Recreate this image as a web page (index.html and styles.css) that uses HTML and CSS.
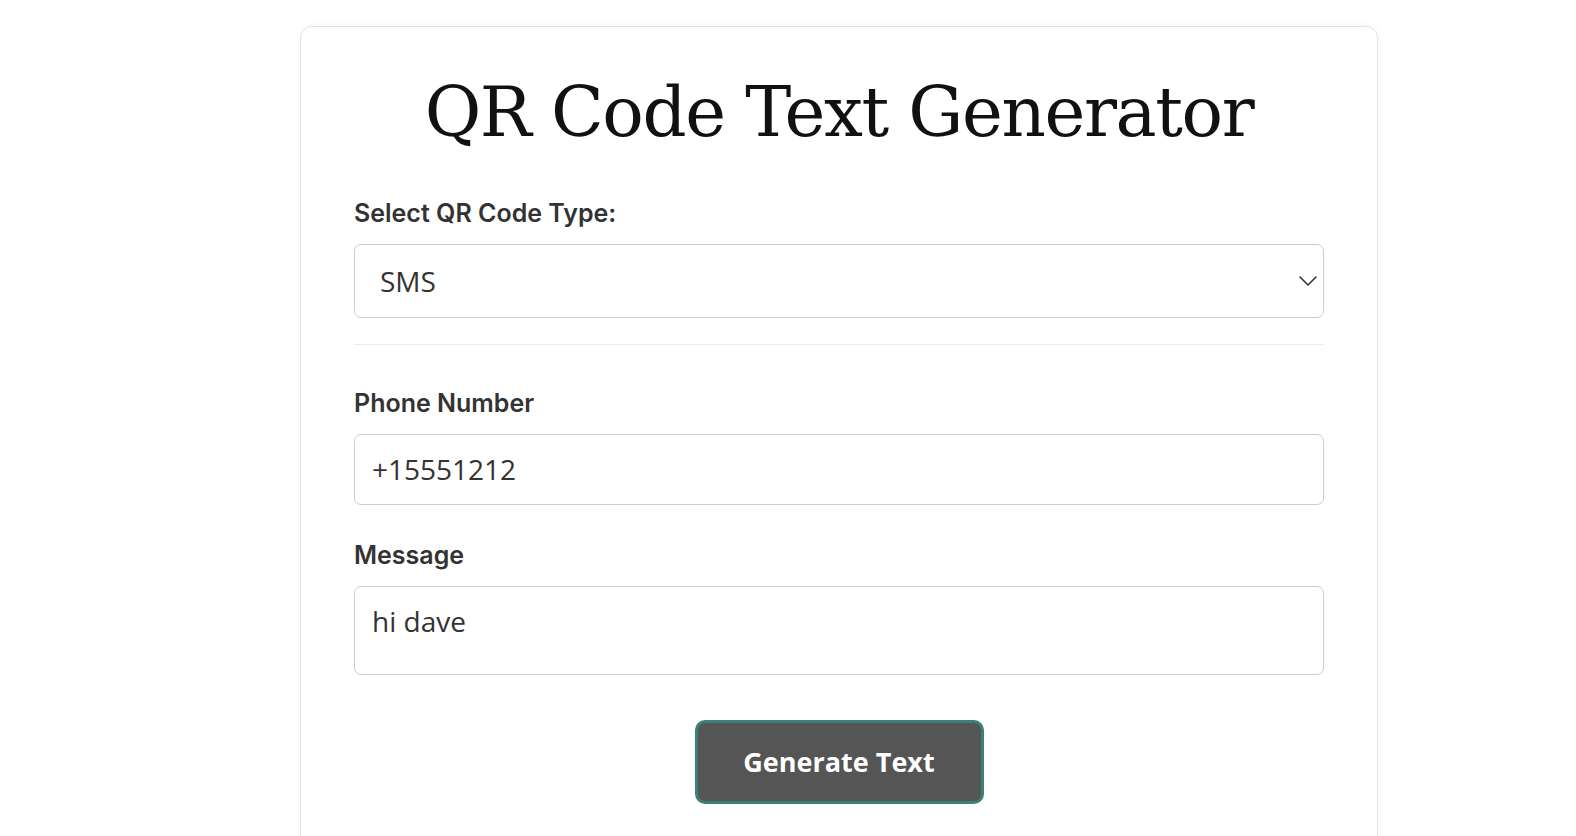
FILE: index.html
```html
<!DOCTYPE html>
<html lang="en">
<head>
<meta charset="utf-8">
<title>QR Code Text Generator</title>
<link rel="stylesheet" href="styles.css">
</head>
<body>
<div class="card">
  <h1 class="title">QR Code Text Generator</h1>
  <div class="field">
    <label class="label" for="type">Select QR Code Type:</label>
    <div class="select-wrap">
      <select id="type" class="control select">
        <option>SMS</option>
        <option>URL</option>
        <option>Email</option>
      </select>
      <svg class="chevron" width="18" height="10" viewBox="0 0 18 10"><polyline points="1,1 9,9 17,1" fill="none" stroke="#333" stroke-width="1.6" stroke-linecap="round" stroke-linejoin="round"/></svg>
    </div>
  </div>
  <hr class="divider">
  <div class="field">
    <label class="label" for="phone">Phone Number</label>
    <input id="phone" class="control input" type="text" value="+15551212">
  </div>
  <div class="field field-gap">
    <label class="label" for="msg">Message</label>
    <textarea id="msg" class="control textarea">hi dave</textarea>
  </div>
  <div class="actions">
    <button class="btn" type="button">Generate Text</button>
  </div>
</div>
</body>
</html>
```

FILE: styles.css
```css
html, body {
  margin: 0;
  padding: 0;
  background: #ffffff;
}

body {
  padding-top: 26px;
  font-family: Inter, "Noto Sans", sans-serif;
}

.card {
  box-sizing: border-box;
  width: 1078px;
  margin-left: 300px;
  padding: 0 53px 80px;
  border: 1px solid #e2e2e2;
  border-radius: 12px;
  box-shadow: 0 0 10px rgba(0, 0, 0, 0.04);
  background: #fff;
}

.title {
  margin: 44px 0 45px;
  font-family: "DejaVu Serif", serif;
  font-weight: 400;
  font-size: 69px;
  line-height: 1.2;
  letter-spacing: -1.4px;
  text-align: center;
  color: #111;
}

.field {
  display: flex;
  flex-direction: column;
}

.field-gap {
  margin-top: 36px;
}

.label {
  display: block;
  margin-bottom: 16px;
  font-family: Inter, sans-serif;
  font-weight: 600;
  font-size: 25px;
  line-height: 29px;
  color: #333;
}

.control {
  box-sizing: border-box;
  width: 100%;
  margin: 0;
  border: 1px solid #cccccc;
  border-radius: 7px;
  background: #fff;
  font-family: "Open Sans", sans-serif;
  font-size: 28px;
  color: #333;
  outline: none;
}

.select-wrap {
  position: relative;
}

.select {
  height: 74px;
  padding: 0 40px 0 25px;
  appearance: none;
  -webkit-appearance: none;
}

.chevron {
  position: absolute;
  right: 7px;
  top: 32px;
  pointer-events: none;
}

.divider {
  margin: 26px 0 44px;
  border: 0;
  border-top: 1px solid #ececec;
  height: 0;
}

.input {
  height: 71px;
  padding: 0 17px;
}

.textarea {
  display: block;
  height: 89px;
  padding: 15px 17px 0;
  resize: none;
  line-height: normal;
}

.actions {
  display: flex;
  justify-content: center;
  margin-top: 45px;
}

.btn {
  box-sizing: border-box;
  width: 289px;
  height: 84px;
  border: 3px solid #3b8179;
  border-radius: 10px;
  background: #555555;
  color: #fff;
  font-family: "Open Sans", sans-serif;
  font-weight: 700;
  font-size: 27px;
  cursor: pointer;
}
```
